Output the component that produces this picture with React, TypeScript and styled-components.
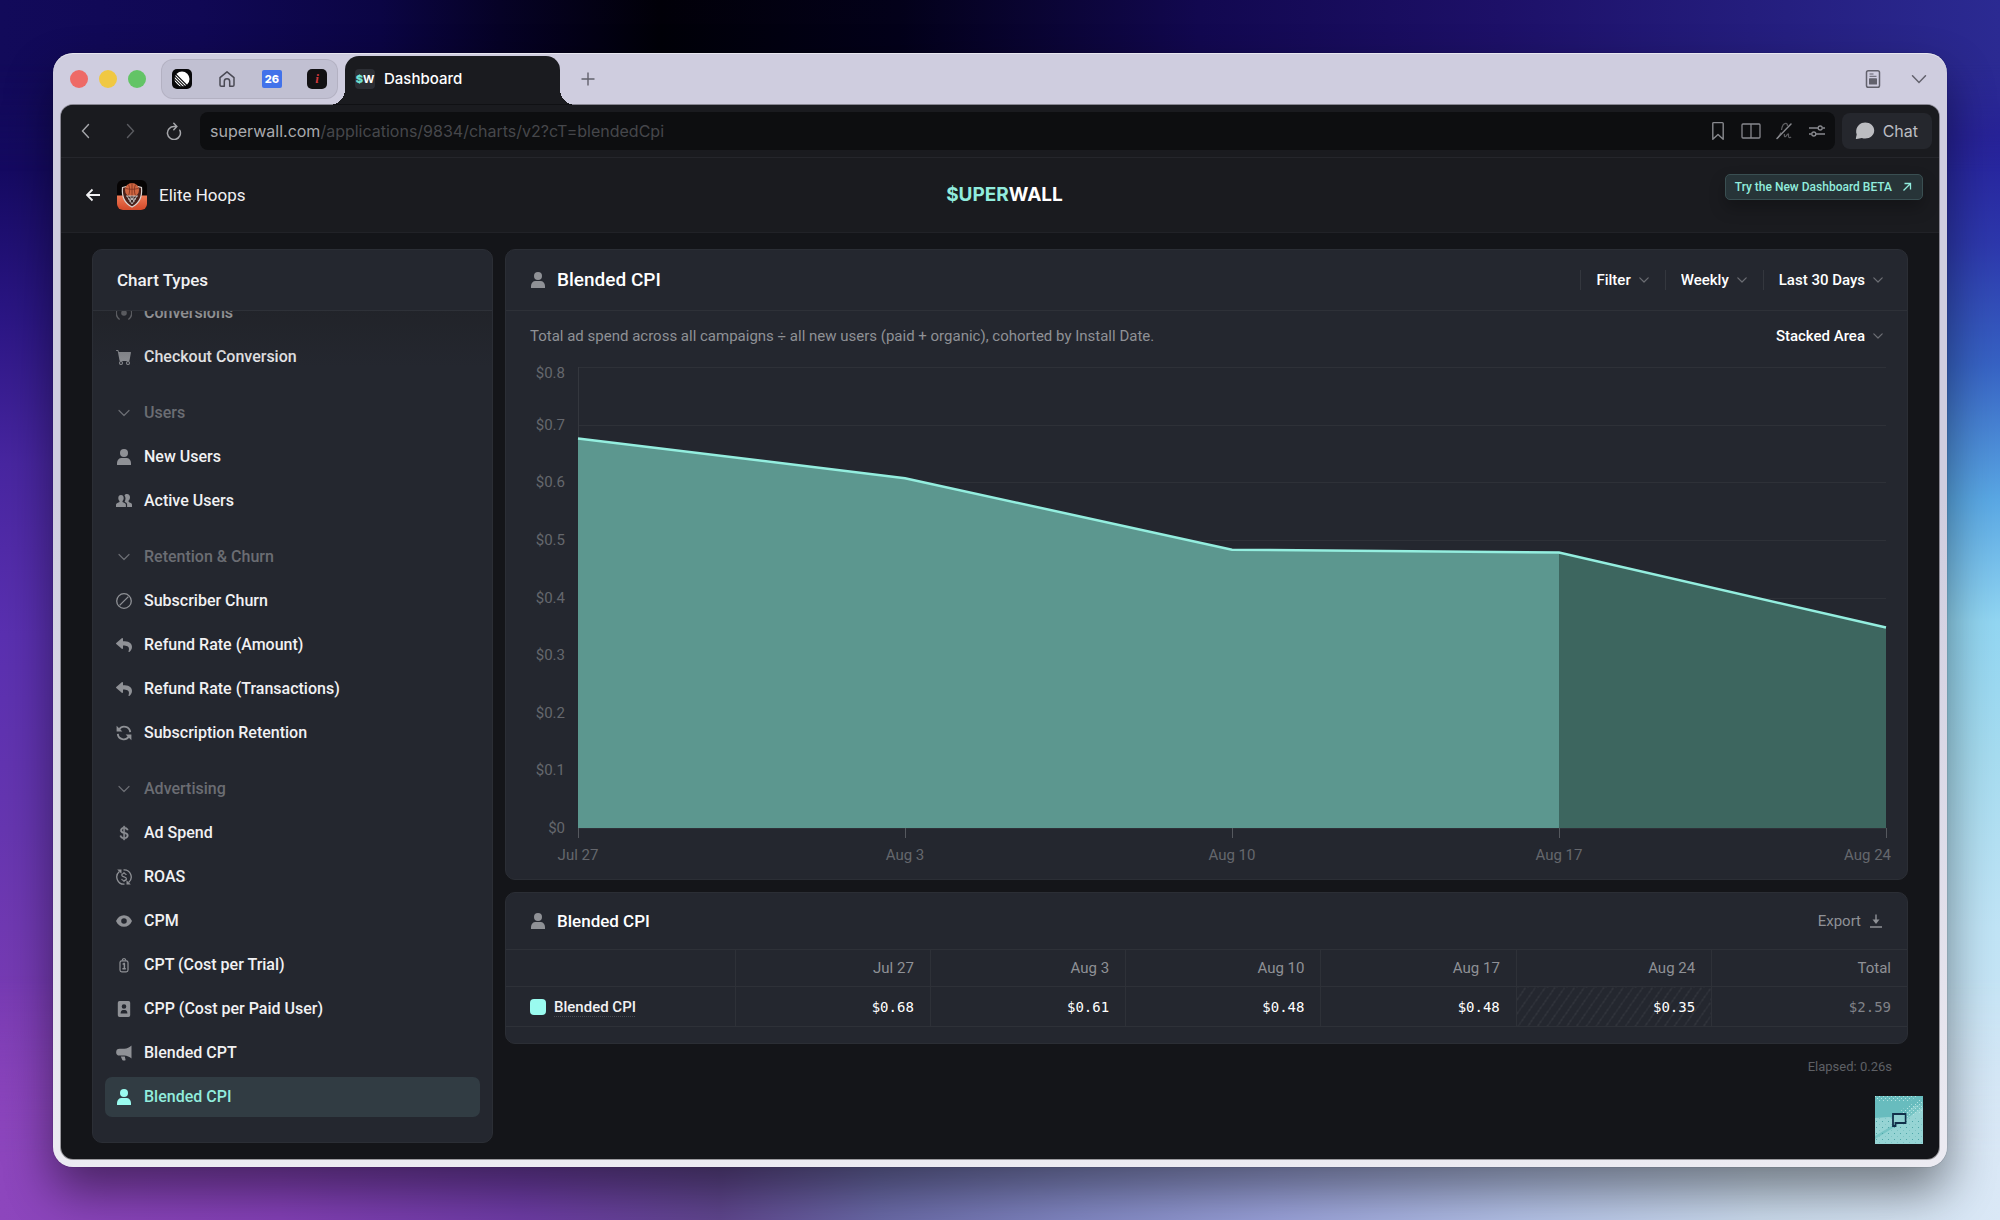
import React, { useLayoutEffect, useRef, useState } from "react";
import styled, { createGlobalStyle, css } from "styled-components";
import { BsCartFill, BsCurrencyDollar } from "react-icons/bs";
import { FaReply } from "react-icons/fa";

const c = {
  page: "#141519",
  chrome: "#1a1b1f",
  card: "#24272f",
  line: "#2e3138",
  mint: "#9afbef",
  mintText: "#91ecdd",
  text: "#f1f1f3",
  soft: "#8f9196",
  dim: "#6b6d73",
};

const ui = `Inter, "Noto Sans", sans-serif`;
const app = `Roboto, "Noto Sans", sans-serif`;
const mono = `"DejaVu Sans Mono", "Liberation Mono", monospace`;

const GlobalStyle = createGlobalStyle`
  *, *::before, *::after { box-sizing: border-box; }
  body { margin: 0; background: #120a58; font-family: ${app}; color: ${c.text}; }
  button, select { font: inherit; color: inherit; background: none; border: 0; padding: 0; margin: 0; cursor: pointer; }
  a { color: inherit; text-decoration: none; }
  h1, h2, p, ul { margin: 0; padding: 0; font-weight: 500; list-style: none; }
  svg { display: block; flex: none; }
`;

/* ---------- desktop and window ---------- */

const Desktop = styled.div`
  position: relative;
  isolation: isolate;
  min-height: 100vh;
  padding: 53px;
  display: flex;
  background: linear-gradient(180deg, #120a5a 0%, #150a62 14%, #2b1684 26%, #4826a0 38%, #5a30b0 52%, #6636b0 68%, #7a3cb4 84%, #8d46bd 100%);
`;

const Glow = styled.div<{ $side: "right" | "top" | "bottom" }>`
  position: absolute;
  inset: 0;
  z-index: -1;
  ${({ $side }) =>
    $side === "right" &&
    css`
      background: linear-gradient(180deg, #2b2a96 0%, #26209a 11%, #2d38ac 20%, #3763c4 30%, #5aa8e4 41%, #92d6f2 51%, #a6dcf0 62%, #c0e4f6 76%, #dae8f6 100%);
      mask-image: linear-gradient(90deg, transparent 30%, #000 90%);
    `}
  ${({ $side }) =>
    $side === "top" &&
    css`
      background: linear-gradient(90deg, #120a5a 0%, #100854 10%, #0b0544 19%, #060226 25%, #010008 33%, #03011a 45%, #120850 60%, #1d1068 75%, #2b2a92 100%);
      mask-image: linear-gradient(180deg, #000 5%, transparent 14%);
    `}
  ${({ $side }) =>
    $side === "bottom" &&
    css`
      background: linear-gradient(90deg, #8d46bd 0%, #8340b6 14%, #6e3ca6 26%, #5f468e 36%, #6a6aa8 44%, #8288c4 54%, #9aa2da 64%, #b4c2e8 76%, #ccdcee 88%, #dae8f6 100%);
      mask-image: linear-gradient(0deg, #000 5%, transparent 20%);
    `}
`;

const Window = styled.div`
  flex: 1;
  min-width: 0;
  height: calc(100vh - 106px);
  min-height: 640px;
  display: flex;
  flex-direction: column;
  padding: 0 8px 8px;
  border-radius: 20px;
  background: linear-gradient(180deg, #cfcddf 0%, #cfcddf 40%, #ecebf2 100%);
  box-shadow: 0 24px 48px rgba(0, 0, 0, 0.46), 0 0 1px rgba(0, 0, 0, 0.6), inset 0 1px 0 rgba(255, 255, 255, 0.5);
`;

const TabBar = styled.div`
  display: flex;
  align-items: center;
  height: 52px;
  padding: 0 2px 0 9px;
`;

const Lights = styled.div`
  display: flex;
  gap: 11px;
`;

const Light = styled.button<{ $color: string }>`
  width: 18px;
  height: 18px;
  border-radius: 50%;
  background: ${({ $color }) => $color};
`;

const Pinned = styled.div`
  display: flex;
  align-items: center;
  gap: 25px;
  height: 40px;
  margin: 0 7px 0 15px;
  padding: 0 10px;
  border-radius: 12px;
  border: 1px solid rgba(0, 0, 0, 0.08);
  background: rgba(100, 95, 120, 0.12);
`;

const Favicon = styled.button<{ $bg?: string; $fg?: string; $square?: boolean }>`
  display: grid;
  place-items: center;
  width: 20px;
  height: 20px;
  border-radius: 5px;
  background: ${({ $bg }) => $bg ?? "transparent"};
  color: ${({ $fg }) => $fg ?? "#4a4954"};
  font: 800 11px/20px ${ui};
  ${({ $square }) =>
    $square &&
    css`
      height: 18px;
      border-radius: 2px;
      line-height: 18px;
    `}
`;

const SerifGlyph = styled.span`
  font: italic 700 13px/18px "Liberation Serif", serif;
`;

const MonoGlyph = styled.span`
  font: 700 11px/20px ${ui};
  color: #fff;
  b {
    color: #6fe0d2;
  }
`;

const Tab = styled.div`
  position: relative;
  align-self: flex-end;
  display: flex;
  align-items: center;
  gap: 9px;
  width: 215px;
  height: 49px;
  padding: 0 10px 3px;
  border-radius: 14px 14px 0 0;
  background: ${c.chrome};
  font: 500 15px/20px ${ui};
  color: #fff;
  &::before,
  &::after {
    content: "";
    position: absolute;
    bottom: 0;
    width: 16px;
    height: 16px;
  }
  &::before {
    right: 100%;
    background: radial-gradient(circle at 0 0, transparent 16px, ${c.chrome} 16px);
  }
  &::after {
    left: 100%;
    background: radial-gradient(circle at 100% 0, transparent 16px, ${c.chrome} 16px);
  }
`;

const TabFavicon = styled.span`
  display: grid;
  place-items: center;
  width: 20px;
  height: 20px;
  border-radius: 4px;
  background: #2c2e34;
`;

const BarButton = styled.button<{ $push?: boolean }>`
  display: grid;
  place-items: center;
  width: 36px;
  height: 36px;
  margin-left: ${({ $push }) => ($push ? "auto" : "10px")};
  color: #62616c;
`;

const Browser = styled.div`
  position: relative;
  flex: 1;
  min-height: 0;
  display: flex;
  flex-direction: column;
  overflow: hidden;
  border-radius: 12px;
  background: ${c.page};
  box-shadow: 0 0 0 1px rgba(0, 0, 0, 0.35);
`;

const Toolbar = styled.div`
  display: flex;
  align-items: center;
  height: 53px;
  padding: 0 7px 0 3px;
  background: ${c.chrome};
  border-bottom: 1px solid #25262b;
`;

const NavButton = styled.button<{ $faint?: boolean }>`
  display: grid;
  place-items: center;
  width: 44px;
  height: 36px;
  color: ${({ $faint }) => ($faint ? "#5a5b60" : "#a5a6aa")};
`;

const Address = styled.div`
  flex: 1;
  display: flex;
  align-items: center;
  gap: 8px;
  height: 38px;
  margin: 0 7px 0 4px;
  padding: 0 5px 0 10px;
  border-radius: 8px;
  background: #0d0e10;
`;

const Url = styled.button`
  flex: 1;
  text-align: left;
  font: 400 16px/24px ${ui};
  color: #46474b;
  span {
    color: #a9aaae;
  }
`;

const ToolButton = styled.button`
  display: grid;
  place-items: center;
  width: 25px;
  height: 25px;
  color: #88898e;
`;

const ChatButton = styled.button`
  display: flex;
  align-items: center;
  gap: 8px;
  height: 36px;
  padding: 0 14px 0 13px;
  border-radius: 8px;
  background: #25272d;
  color: #bcbdc1;
  font: 400 16px/24px ${ui};
`;

/* ---------- app header ---------- */

const Header = styled.header`
  display: grid;
  grid-template-columns: 1fr auto 1fr;
  align-items: center;
  height: 75px;
  padding: 0 16px 0 25px;
  background: ${c.chrome};
  border-bottom: 1px solid #212227;
`;

const AppLink = styled.a`
  display: flex;
  align-items: center;
  gap: 12px;
  font-size: 17px;
  line-height: 24px;
`;

const Back = styled.span`
  margin-right: 5px;
`;

const Logo = styled.div`
  font: 700 19px/24px ${ui};
  color: #fff;
  span {
    color: ${c.mintText};
  }
`;

const BetaButton = styled.a`
  justify-self: end;
  align-self: start;
  display: flex;
  align-items: center;
  gap: 10px;
  height: 26px;
  margin-top: 16px;
  padding: 0 10px 0 9px;
  border: 1px solid #3a4f52;
  border-radius: 5px;
  background: #273438;
  box-shadow: 0 8px 16px rgba(0, 0, 0, 0.25);
  color: ${c.mintText};
  font-size: 12px;
  font-weight: 500;
  line-height: 20px;
`;

/* ---------- body ---------- */

const Body = styled.div`
  flex: 1;
  min-height: 0;
  display: flex;
  gap: 12px;
  padding: 16px 31px;
`;

const cardStyle = css`
  border: 1px solid #2b2e35;
  border-radius: 10px;
  background: ${c.card};
  overflow: hidden;
`;

const Sidebar = styled.aside`
  ${cardStyle}
  display: flex;
  flex-direction: column;
  flex: 0 0 401px;
`;

const SideTitle = styled.h2`
  flex: none;
  height: 61px;
  padding: 0 24px;
  border-bottom: 1px solid ${c.line};
  font-size: 17px;
  line-height: 60px;
`;

const SideList = styled.ul`
  position: relative;
  flex: 1;
  min-height: 0;
  display: flex;
  flex-direction: column;
  justify-content: flex-end;
  gap: 4px;
  overflow: hidden;
  padding: 0 12px 25px;
  &::before {
    content: "";
    position: absolute;
    inset: 0 0 auto;
    height: 56px;
    z-index: 1;
    background: linear-gradient(180deg, rgba(31, 32, 36, 0.5), rgba(36, 39, 47, 0));
  }
`;

const SideGroup = styled.li`
  margin-top: 12px;
`;

const row = css`
  display: flex;
  align-items: center;
  gap: 12px;
  width: 100%;
  height: 40px;
  padding: 0 11px;
  border-radius: 7px;
  font-size: 16px;
  line-height: 24px;
`;

const GroupButton = styled.button`
  ${row}
  color: ${c.dim};
`;

const SideLink = styled.a<{ $active?: boolean }>`
  ${row}
  font-weight: 500;
  background: ${({ $active }) => ($active ? "#313c43" : "transparent")};
  color: ${({ $active }) => ($active ? c.mintText : c.text)};
  svg {
    color: ${({ $active }) => ($active ? c.mint : c.soft)};
  }
`;

const Main = styled.main`
  flex: 1;
  min-width: 0;
  display: flex;
  flex-direction: column;
  gap: 12px;
`;

const Card = styled.section`
  ${cardStyle}
`;

const CardHead = styled.div<{ $tight?: boolean }>`
  display: flex;
  align-items: center;
  gap: 11px;
  height: ${({ $tight }) => ($tight ? 56 : 60)}px;
  padding: 0 24px;
  color: ${c.soft};
`;

const CardTitle = styled.h1<{ $small?: boolean }>`
  flex: 1;
  color: #fff;
  font-size: ${({ $small }) => ($small ? 17 : 19)}px;
  line-height: 24px;
`;

const Controls = styled.div`
  display: flex;
`;

const Control = styled.div<{ $line?: boolean }>`
  display: flex;
  align-items: center;
  gap: 8px;
  height: 20px;
  padding: 0 0 0 15px;
  margin-left: ${({ $line }) => ($line ? "16px" : "0")};
  border-left: 1px solid ${({ $line }) => ($line ? "#34373e" : "transparent")};
  color: ${c.dim};
  font-size: 15px;
  font-weight: 500;
  line-height: 20px;
  button,
  select {
    appearance: none;
    field-sizing: content;
    color: #fff;
  }
`;

const Describe = styled.div`
  display: flex;
  align-items: center;
  justify-content: space-between;
  height: 50px;
  padding: 0 24px;
  border-top: 1px solid ${c.line};
  color: ${c.soft};
  font-size: 15px;
  line-height: 20px;
`;

const ChartBox = styled.div`
  padding: 0 16px 11px 24px;
`;

const ChartText = styled.text`
  fill: #65676d;
  font: 400 15px ${app};
`;

const ExportButton = styled.button`
  display: flex;
  align-items: center;
  gap: 8px;
  color: ${c.soft};
  font-size: 15px;
  line-height: 20px;
`;

const Table = styled.table`
  width: 100%;
  table-layout: fixed;
  border-collapse: collapse;
  margin-bottom: 16px;
  font-size: 15px;
  line-height: 20px;
`;

const cell = css`
  padding: 0 16px;
  border: 1px solid ${c.line};
  text-align: right;
  vertical-align: middle;
  &:first-child {
    width: 229px;
    padding-left: 24px;
    border-left: 0;
    text-align: left;
  }
  &:last-child {
    border-right: 0;
  }
`;

const Th = styled.th`
  ${cell}
  height: 37px;
  color: ${c.soft};
  font-weight: 400;
`;

const Td = styled.td<{ $partial?: boolean; $muted?: boolean }>`
  ${cell}
  height: 40px;
  font: 400 14px/20px ${mono};
  color: ${({ $muted }) => ($muted ? "#808288" : "#fff")};
  ${({ $partial }) =>
    $partial &&
    css`
      background: repeating-linear-gradient(125deg, transparent 0 7px, #34373e 7px 8px);
    `}
`;

const RowHead = styled.th`
  ${cell}
  height: 40px;
  font-weight: 500;
`;

const Legend = styled.span`
  display: flex;
  align-items: center;
  gap: 8px;
`;

const Swatch = styled.i`
  width: 16px;
  height: 16px;
  border-radius: 4px;
  background: ${c.mint};
`;

const Dotted = styled.span`
  text-decoration: underline dotted #4a4d54 1px;
  text-underline-offset: 4px;
`;

const Elapsed = styled.p`
  padding: 1px 16px;
  text-align: right;
  color: #5e6065;
  font-size: 13px;
  font-weight: 400;
  line-height: 20px;
`;

const Widget = styled.button`
  position: absolute;
  right: 16px;
  bottom: 15px;
  width: 48px;
  height: 48px;
`;

/* ---------- icons ---------- */

type P = { size?: number };

const Svg = ({ size = 16, box = 16, children }: React.PropsWithChildren<P & { box?: number }>) => (
  <svg width={size} height={size} viewBox={`0 0 ${box} ${box}`} fill="none" aria-hidden="true">
    {children}
  </svg>
);

const Chevron = ({ size = 10 }: P) => (
  <svg width={size} height={size} viewBox="0 0 10 10" fill="none" aria-hidden="true">
    <path d="M.8 2.800 5 7l4.200-4.200" stroke="currentColor" strokeWidth="1.200" strokeLinecap="round" strokeLinejoin="round" />
  </svg>
);

const GroupChevron = () => (
  <Svg>
    <path d="m3 5.500 5 5 5-5" stroke="currentColor" strokeWidth="1.200" strokeLinecap="round" strokeLinejoin="round" />
  </Svg>
);

const UserIcon = () => (
  <Svg>
    <circle cx="8" cy="4" r="4" fill="currentColor" />
    <path d="M1 16v-2c0-3 2-5 4.500-5h5c2.500 0 4.500 2 4.500 5v2z" fill="currentColor" />
  </Svg>
);

const UsersIcon = () => (
  <Svg>
    <path
      d="M5 2c1.700 0 2.700 1.300 2.700 3 0 1.300-.5 2.300-1.200 3v1l2.500 1.300c.6.300.9.900.9 1.500V14H0v-2.200c0-.6.300-1.200.9-1.500L3.500 9V8C2.800 7.300 2.300 6.300 2.300 5 2.300 3.300 3.300 2 5 2z"
      fill="currentColor"
    />
    <path
      d="M11 1c1.900 0 3 1.300 3 3.200 0 1.400-.6 2.600-1.400 3.300V9l2.600 1.300c.5.300.8.800.8 1.400V14h-4.900v-2.400c0-1-.5-1.700-1.300-2.100l-1.200-.7c.5-.9.900-2 .9-3.300 0-1.200-.4-2.200-1-3C9 1.400 9.900 1 11 1z"
      fill="currentColor"
    />
  </Svg>
);

const BanIcon = () => (
  <Svg>
    <circle cx="8" cy="8" r="7.300" stroke="currentColor" strokeWidth="1.300" />
    <path d="M3.600 12.400 12.400 3.600" stroke="currentColor" strokeWidth="1.300" />
  </Svg>
);

const SyncIcon = () => (
  <Svg>
    <path d="M3.200 4.400A6 6 0 0 1 14.200 7.200M12.800 11.600A6 6 0 0 1 1.800 8.800" stroke="currentColor" strokeWidth="1.900" />
    <path d="M.6.800v5.800h5.800zM15.400 15.200V9.400H9.600z" fill="currentColor" />
  </Svg>
);

const RoasIcon = () => (
  <Svg>
    <path d="M7.500.8A7.200 7.200 0 0 1 12.600 13.500M8.500 15.200A7.200 7.200 0 0 1 3.400 2.500" stroke="currentColor" strokeWidth="1.300" />
    <path d="M1.200.500h4.300v4.300zM14.800 15.500h-4.300v-4.300z" fill="currentColor" />
    <path
      d="M10.300 6C10 5 9.200 4.500 8 4.500c-1.300 0-2.200.7-2.200 1.700C5.800 8.500 10.400 7.300 10.400 9.800c0 1-1 1.700-2.400 1.700-1.200 0-2.100-.6-2.400-1.600M8 3v1.500m0 7V13"
      stroke="currentColor"
      strokeWidth="1.200"
    />
  </Svg>
);

const EyeIcon = () => (
  <Svg>
    <path
      fillRule="evenodd"
      d="M8 2.200c3.600 0 6.500 2.200 8 5.800-1.500 3.600-4.400 5.800-8 5.800S1.500 11.600 0 8c1.500-3.600 4.400-5.800 8-5.800zm0 3a2.800 2.800 0 1 0 0 5.600 2.800 2.800 0 0 0 0-5.600z"
      fill="currentColor"
    />
  </Svg>
);

const TrialIcon = () => (
  <Svg>
    <rect x="4" y="3.800" width="8" height="11" rx="1.800" stroke="currentColor" strokeWidth="1.200" />
    <path d="M6.200 3.600c0-1.200.8-1.900 1.800-1.900s1.800.7 1.800 1.900" stroke="currentColor" strokeWidth="1.200" />
    <path d="M6.600 7h1.800v4.600M6.400 11.800h3.400M8.200 5.800v1" stroke="currentColor" strokeWidth="1.500" />
  </Svg>
);

const BadgeIcon = () => (
  <Svg>
    <path
      fillRule="evenodd"
      d="M3.500 0h9A1.700 1.700 0 0 1 14.200 1.700v12.600a1.700 1.700 0 0 1-1.700 1.700h-9a1.700 1.700 0 0 1-1.700-1.700V1.700A1.700 1.700 0 0 1 3.500 0zM8 3.200a2.300 2.300 0 1 0 0 4.600 2.300 2.300 0 0 0 0-4.600zM4.600 12.400h6.800c0-2-1-3.400-2.400-3.400H7c-1.400 0-2.400 1.400-2.400 3.400z"
      fill="currentColor"
    />
  </Svg>
);

const MegaphoneIcon = () => (
  <Svg>
    <path d="M15.500.5v13c-2-1.700-4.500-2.700-7.200-2.900H3.600a3.400 3.400 0 0 1 0-6.900h4.700c2.700-.2 5.200-1.300 7.200-3.200z" fill="currentColor" />
    <path d="M4.800 11.400h4l.7 3.100c.1.600-.2 1-.8 1H7.200c-.5 0-.9-.3-1-.8z" fill="currentColor" />
  </Svg>
);

const TargetIcon = () => (
  <Svg>
    <circle cx="8" cy="8" r="2.800" fill="currentColor" />
    <path d="M3.600 1.500a8 8 0 0 0 0 13M12.400 1.500a8 8 0 0 1 0 13" stroke="currentColor" strokeWidth="1.500" />
  </Svg>
);

const EliteIcon = () => (
  <svg width="30" height="30" viewBox="0 0 30 30" aria-hidden="true">
    <defs>
      <clipPath id="eliteClip">
        <rect width="30" height="30" rx="6" />
      </clipPath>
      <linearGradient id="eliteFloor" x1="0" y1="0" x2="0" y2="1">
        <stop offset="0" stopColor="#f07a55" />
        <stop offset="1" stopColor="#d2492a" />
      </linearGradient>
    </defs>
    <g clipPath="url(#eliteClip)">
      <rect width="30" height="30" fill="#060404" />
      <path d="M0 15.500h30V30H0z" fill="url(#eliteFloor)" />
      <path d="M5.500 7.500 15 5l9.500 2.500c.8 8-1.500 15.500-9.500 19.500C7 23 4.700 15.500 5.500 7.500z" fill="#4a211a" stroke="#d9d2cf" strokeWidth="1.200" />
      <circle cx="15" cy="10" r="7" fill="#cf6540" />
      <path d="M15 3v13M9 8.500c3 1 9 1 12 0M11.500 4.500c1.500 3 1.500 8 0 11M18.500 4.500c-1.500 3-1.500 8 0 11" stroke="#7a3020" strokeWidth=".8" fill="none" />
      <path d="M9 16h12l-2.500 5L15 24.500 11.500 21z" fill="#3a2a28" />
      <path d="M9 16h12M10 16l5 8 5-8M12.500 16l5 5.500M17.500 16l-5 5.500M11 19h8" stroke="#d9d2cf" strokeWidth=".8" fill="none" />
    </g>
  </svg>
);

const WidgetArt = () => (
  <svg width="48" height="48" viewBox="0 0 48 48" aria-hidden="true">
    <defs>
      <pattern id="dots" width="6" height="6" patternUnits="userSpaceOnUse">
        <rect x="1" y="1" width="1" height="1" fill="#4fa6a8" />
        <rect x="4" y="4" width="1" height="1" fill="#7cc4c4" />
      </pattern>
      <pattern id="specks" width="4" height="4" patternUnits="userSpaceOnUse">
        <rect width="1" height="1" fill="#b4e4e2" />
        <rect x="2" y="2" width="1" height="1" fill="#b4e4e2" />
      </pattern>
    </defs>
    <rect width="48" height="48" fill="#68bcbe" />
    <path d="M0 0h42l-8 6H8L0 4z" fill="url(#specks)" />
    <path d="M0 22l14-1 8 2 10-6 8-7 8-2v40H0z" fill="#96d4d4" />
    <path d="M0 40 20 28 34 16 48 6v5L34 21 18 32 0 43z" fill="#76c4c4" />
    <path d="M0 20h48v28H0z" fill="url(#dots)" />
    <path d="M26 14 48 2v14L30 22z" fill="url(#specks)" />
    <path d="M18 18h12.500v9H20.500v3H18z" fill="none" stroke="#12304a" strokeWidth="1.800" />
    <path d="M19 19h10.500v7H19z" fill="#8fd0d0" />
  </svg>
);

/* ---------- chart ---------- */

const points = [
  { label: "Jul 27", value: 0.676 },
  { label: "Aug 3", value: 0.607 },
  { label: "Aug 10", value: 0.483 },
  { label: "Aug 17", value: 0.478 },
  { label: "Aug 24", value: 0.348 },
];

const AreaChart = () => {
  const box = useRef<HTMLDivElement>(null);
  const [width, setWidth] = useState(1361);
  useLayoutEffect(() => {
    const el = box.current;
    if (!el) return;
    const observer = new ResizeObserver(([entry]) => setWidth(Math.round(entry.contentRect.width)));
    observer.observe(el);
    return () => observer.disconnect();
  }, []);

  const left = 48;
  const right = width - 5;
  const top = 7;
  const bottom = 468;
  const x = (i: number) => Math.round(left + ((right - left) * i) / (points.length - 1));
  const y = (v: number) => bottom - ((bottom - top) * v) / 0.8;
  const at = (i: number) => `${x(i)} ${y(points[i].value).toFixed(1)}`;
  const ticks = [0, 0.1, 0.2, 0.3, 0.4, 0.5, 0.6, 0.7, 0.8];

  return (
    <div ref={box}>
      <svg width={width} height={508} role="img" aria-label="Blended CPI by week">
        {ticks.map((t) => (
          <line key={t} x1={left} x2={right} y1={Math.round(y(t)) + 0.5} y2={Math.round(y(t)) + 0.5} stroke={c.line} />
        ))}
        <line x1={left + 0.5} x2={left + 0.5} y1={top} y2={bottom} stroke="#34373e" />
        <path d={`M${at(0)} L${at(1)} L${at(2)} L${at(3)} V${bottom} H${left} Z`} fill="#5c978f" />
        <path d={`M${at(3)} L${at(4)} V${bottom} H${x(3)} Z`} fill="#3d665f" />
        <path d={`M${points.map((_, i) => at(i)).join(" L")}`} fill="none" stroke="#94eedf" strokeWidth="2.500" />
        {ticks.map((t) => (
          <ChartText key={t} x={35} y={t === 0.8 ? y(t) + 11 : y(t) + 5} textAnchor="end">
            {t === 0 ? "$0" : `$${t.toFixed(1)}`}
          </ChartText>
        ))}
        {points.map((p, i) => (
          <g key={p.label}>
            <line x1={x(i) + 0.5} x2={x(i) + 0.5} y1={bottom} y2={bottom + 10} stroke="#55585e" />
            <ChartText x={i === 4 ? width : x(i)} y={bottom + 32} textAnchor={i === 4 ? "end" : "middle"}>
              {p.label}
            </ChartText>
          </g>
        ))}
      </svg>
    </div>
  );
};

/* ---------- data ---------- */

type Item = { label: string; icon: React.ReactNode; active?: boolean };

const sections: { title?: string; items: Item[] }[] = [
  {
    items: [
      { label: "Conversions", icon: <TargetIcon /> },
      { label: "Checkout Conversion", icon: <BsCartFill size={16} /> },
    ],
  },
  {
    title: "Users",
    items: [
      { label: "New Users", icon: <UserIcon /> },
      { label: "Active Users", icon: <UsersIcon /> },
    ],
  },
  {
    title: "Retention & Churn",
    items: [
      { label: "Subscriber Churn", icon: <BanIcon /> },
      { label: "Refund Rate (Amount)", icon: <FaReply size={16} /> },
      { label: "Refund Rate (Transactions)", icon: <FaReply size={16} /> },
      { label: "Subscription Retention", icon: <SyncIcon /> },
    ],
  },
  {
    title: "Advertising",
    items: [
      { label: "Ad Spend", icon: <BsCurrencyDollar size={16} strokeWidth={0.5} /> },
      { label: "ROAS", icon: <RoasIcon /> },
      { label: "CPM", icon: <EyeIcon /> },
      { label: "CPT (Cost per Trial)", icon: <TrialIcon /> },
      { label: "CPP (Cost per Paid User)", icon: <BadgeIcon /> },
      { label: "Blended CPT", icon: <MegaphoneIcon /> },
      { label: "Blended CPI", icon: <UserIcon />, active: true },
    ],
  },
];

const columns = [
  { label: "Jul 27", value: "$0.68" },
  { label: "Aug 3", value: "$0.61" },
  { label: "Aug 10", value: "$0.48" },
  { label: "Aug 17", value: "$0.48" },
  { label: "Aug 24", value: "$0.35", partial: true },
  { label: "Total", value: "$2.59", muted: true },
];

/* ---------- page ---------- */

const Tabs = () => (
  <TabBar>
    <Lights>
      <Light $color="#ee6a66" aria-label="Close window" />
      <Light $color="#f0c843" aria-label="Minimise window" />
      <Light $color="#63c466" aria-label="Zoom window" />
    </Lights>
    <Pinned>
      <Favicon $bg="#08080a" aria-label="Linear">
        <Svg size={16} box={16}>
          <circle cx="8" cy="8" r="7.500" fill="#fff" />
          <path d="M-1 3.500 12.500 17M-1 6.500 9.500 17M-1 9.500 6.500 17M0 1.500 14.500 16" stroke="#08080a" strokeWidth="1.100" />
        </Svg>
      </Favicon>
      <Favicon aria-label="Home">
        <Svg size={18} box={18}>
          <path
            d="M2 7.600 9 1.800l7 5.800v7.400c0 .8-.5 1.300-1.300 1.300h-3V11.500a2.700 2.700 0 0 0-5.400 0v4.800h-3C2.500 16.300 2 15.800 2 15z"
            stroke="currentColor"
            strokeWidth="1.500"
            strokeLinejoin="round"
          />
        </Svg>
      </Favicon>
      <Favicon $bg="#4272ea" $fg="#fff" $square>
        26
      </Favicon>
      <Favicon $bg="#121113" $fg="#d2383c">
        <SerifGlyph>i</SerifGlyph>
      </Favicon>
    </Pinned>
    <Tab>
      <TabFavicon>
        <MonoGlyph>
          <b>$</b>W
        </MonoGlyph>
      </TabFavicon>
      Dashboard
    </Tab>
    <BarButton aria-label="New tab">
      <Svg size={14} box={14}>
        <path d="M7 .5v13M.5 7h13" stroke="currentColor" strokeWidth="1.400" />
      </Svg>
    </BarButton>
    <BarButton $push aria-label="Reading list">
      <Svg size={18} box={18}>
        <rect x="2.500" y=".8" width="13" height="16.400" rx="1.800" stroke="currentColor" strokeWidth="1.500" />
        <path d="M5.500 4h4M5.500 6.300h7" stroke="currentColor" />
        <rect x="5" y="8.300" width="8" height="6.200" rx=".6" fill="currentColor" />
      </Svg>
    </BarButton>
    <BarButton aria-label="All tabs">
      <Svg size={16}>
        <path d="m1.500 4.800 6.500 6.700 6.500-6.700" stroke="currentColor" strokeWidth="1.500" strokeLinecap="round" />
      </Svg>
    </BarButton>
  </TabBar>
);

const AddressBar = () => (
  <Toolbar>
    <NavButton aria-label="Back">
      <Svg>
        <path d="M10.500 1.500 4.500 8l6 6.500" stroke="currentColor" strokeWidth="1.400" strokeLinecap="round" />
      </Svg>
    </NavButton>
    <NavButton $faint aria-label="Forward">
      <Svg>
        <path d="m5.500 1.500 6 6.500-6 6.500" stroke="currentColor" strokeWidth="1.400" strokeLinecap="round" />
      </Svg>
    </NavButton>
    <NavButton aria-label="Reload">
      <Svg size={18} box={18}>
        <path d="M14.800 8.200A6.500 6.500 0 1 1 9 4.500h2.400M8.800 1.200l3 3.300-3 3.200" stroke="currentColor" strokeWidth="1.500" strokeLinecap="round" />
      </Svg>
    </NavButton>
    <Address>
      <Url aria-label="Page address">
        <span>superwall.com</span>/applications/9834/charts/v2?cT=blendedCpi
      </Url>
      <ToolButton aria-label="Bookmark">
        <Svg size={20} box={20}>
          <path d="M4.800 2.500c0-.5.400-.9.900-.9h8.600c.5 0 .9.400.9.900v15.700L10 13.400l-5.200 4.800z" stroke="currentColor" strokeWidth="1.400" strokeLinejoin="round" />
        </Svg>
      </ToolButton>
      <ToolButton aria-label="Split view">
        <Svg size={20} box={20}>
          <path d="M2 3h16c.6 0 1 .4 1 1v12c0 .6-.4 1-1 1H2c-.6 0-1-.4-1-1V4c0-.6.400-1 1-1zM10 3v14" stroke="currentColor" strokeWidth="1.300" />
        </Svg>
      </ToolButton>
      <ToolButton aria-label="Signature">
        <Svg size={18} box={18}>
          <path
            d="M6.500 8c.6-4.200 2.300-6.600 4.300-6.600 1.400 0 1.900 1.200 1.400 2.600M6 10.500 3 16M9.500 12c-.5 2.200.2 3.300 1.400 2.300.9-.8 1.500-2.600 2.400-2.500.8.100-.5 3.100.8 3.700.7.300 1.500-.2 2-.7"
            stroke="currentColor"
            strokeWidth="1.200"
            opacity=".65"
          />
          <path d="M16 2 2 16.500" stroke="currentColor" strokeWidth="1.500" strokeLinecap="round" />
        </Svg>
      </ToolButton>
      <ToolButton aria-label="Site settings">
        <Svg size={18} box={18}>
          <path d="M1 6h9M14.500 6H17M1 12h2.500M8 12h9" stroke="currentColor" strokeWidth="1.500" />
          <circle cx="12.200" cy="6" r="2" stroke="currentColor" strokeWidth="1.300" />
          <circle cx="5.800" cy="12" r="2" stroke="currentColor" strokeWidth="1.300" />
        </Svg>
      </ToolButton>
    </Address>
    <ChatButton>
      <Svg size={20} box={20}>
        <path d="M10.200 1.600c5 0 9 3.500 9 8s-4 8-9 8c-1.200 0-2.300-.2-3.300-.6L1.700 18c-.6.100-1-.4-.8-1l.8-3.500a7.300 7.300 0 0 1-.5-3.900c.6-4.600 4.300-8 9-8z" fill="currentColor" />
      </Svg>
      Chat
    </ChatButton>
  </Toolbar>
);

export default function App() {
  return (
    <>
      <GlobalStyle />
      <Desktop>
        <Glow $side="right" />
        <Glow $side="top" />
        <Glow $side="bottom" />
        <Window>
          <Tabs />
          <Browser>
            <AddressBar />
            <Header>
              <AppLink href="#apps">
                <Back>
                  <Svg size={14} box={14}>
                    <path d="M6.500 1.500 1 7l5.500 5.500M1.200 7H14" stroke="currentColor" strokeWidth="1.800" />
                  </Svg>
                </Back>
                <EliteIcon />
                Elite Hoops
              </AppLink>
              <Logo>
                <span>$UPER</span>WALL
              </Logo>
              <BetaButton href="#beta">
                Try the New Dashboard BETA
                <Svg size={10} box={10}>
                  <path d="M1.500 8.500 8.300 1.700M2.500 1.500h6v6" stroke="currentColor" strokeWidth="1.300" />
                </Svg>
              </BetaButton>
            </Header>
            <Body>
              <Sidebar>
                <SideTitle>Chart Types</SideTitle>
                <SideList>
                  {sections.map((s, i) => (
                    <React.Fragment key={i}>
                      {s.title && (
                        <SideGroup>
                          <GroupButton aria-expanded="true">
                            <GroupChevron />
                            {s.title}
                          </GroupButton>
                        </SideGroup>
                      )}
                      {s.items.map((item) => (
                        <li key={item.label}>
                          <SideLink href="#chart" $active={item.active} aria-current={item.active ? "page" : undefined}>
                            {item.icon}
                            {item.label}
                          </SideLink>
                        </li>
                      ))}
                    </React.Fragment>
                  ))}
                </SideList>
              </Sidebar>
              <Main>
                <Card>
                  <CardHead>
                    <UserIcon />
                    <CardTitle>Blended CPI</CardTitle>
                    <Controls>
                      <Control $line>
                        <button>Filter</button>
                        <Chevron />
                      </Control>
                      <Control $line>
                        <select aria-label="Interval" defaultValue="Weekly">
                          <option>Weekly</option>
                        </select>
                        <Chevron />
                      </Control>
                      <Control $line>
                        <select aria-label="Date range" defaultValue="Last 30 Days">
                          <option>Last 30 Days</option>
                        </select>
                        <Chevron />
                      </Control>
                    </Controls>
                  </CardHead>
                  <Describe>
                    <span>Total ad spend across all campaigns ÷ all new users (paid + organic), cohorted by Install Date.</span>
                    <Control>
                      <select aria-label="Chart style" defaultValue="Stacked Area">
                        <option>Stacked Area</option>
                      </select>
                      <Chevron />
                    </Control>
                  </Describe>
                  <ChartBox>
                    <AreaChart />
                  </ChartBox>
                </Card>
                <Card>
                  <CardHead $tight>
                    <UserIcon />
                    <CardTitle as="h2" $small>
                      Blended CPI
                    </CardTitle>
                    <ExportButton>
                      Export
                      <Svg size={14} box={14}>
                        <path d="M7 .5v8M1 13h12" stroke="currentColor" strokeWidth="1.400" />
                        <path d="M3.500 5.500h7L7 10z" fill="currentColor" />
                      </Svg>
                    </ExportButton>
                  </CardHead>
                  <Table>
                    <thead>
                      <tr>
                        <Th aria-label="Series" />
                        {columns.map((col) => (
                          <Th key={col.label} scope="col">
                            {col.label}
                          </Th>
                        ))}
                      </tr>
                    </thead>
                    <tbody>
                      <tr>
                        <RowHead scope="row">
                          <Legend>
                            <Swatch />
                            <Dotted>Blended CPI</Dotted>
                          </Legend>
                        </RowHead>
                        {columns.map((col) => (
                          <Td key={col.label} $partial={col.partial} $muted={col.muted}>
                            {col.value}
                          </Td>
                        ))}
                      </tr>
                    </tbody>
                  </Table>
                </Card>
                <Elapsed>Elapsed: 0.26s</Elapsed>
              </Main>
            </Body>
            <Widget aria-label="Open support chat">
              <WidgetArt />
            </Widget>
          </Browser>
        </Window>
      </Desktop>
    </>
  );
}
